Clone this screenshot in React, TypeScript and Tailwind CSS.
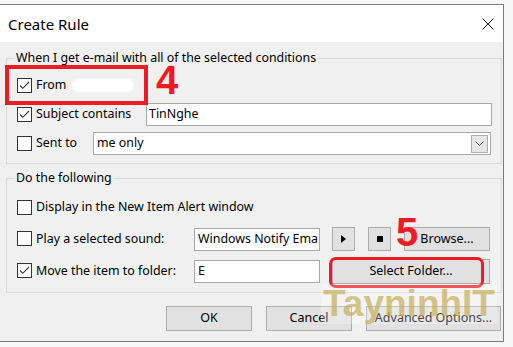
import React from "react";

const Check = ({ checked }: { checked?: boolean }) => (
  <div className="w-[15px] h-[15px] shrink-0 border border-[#333333] bg-white flex items-center justify-center">
    {checked && (
      <svg width="13" height="13" viewBox="0 0 13 13">
        <path d="M2 6.5 L4.8 9.3 L11 3" fill="none" stroke="#333333" strokeWidth="1.1" />
      </svg>
    )}
  </div>
);

const Btn = ({ className = "", children }: { className?: string; children?: React.ReactNode }) => (
  <div
    className={
      "h-[24px] shrink-0 bg-[#e1e1e1] border border-[#adadad] flex items-center justify-center text-[12.5px] text-black " +
      className
    }
  >
    {children}
  </div>
);

export default function App() {
  return (
    <div
      className="relative w-[513px] h-[347px] bg-[#f7f7f7] overflow-hidden text-black"
      style={{ fontFamily: '"Noto Sans", "Open Sans", sans-serif' }}
    >
      <div className="mt-[4px] w-[504px] h-[338px] border-t border-r border-b border-[#7c7c7c] bg-[#f0f0f0] flex flex-col">
        {/* title bar */}
        <div className="h-[37px] shrink-0 bg-white flex items-center pl-[8px] pr-[9px]">
          <span className="text-[15px] leading-none mt-[1px]">Create Rule</span>
          <svg className="ml-auto mt-[1px]" width="12" height="12" viewBox="0 0 12 12">
            <path d="M0.5 0.5 L11.5 11.5 M11.5 0.5 L0.5 11.5" stroke="#111" strokeWidth="1" />
          </svg>
        </div>

        {/* group 1 */}
        <div className="relative mt-[16px] ml-[6px] w-[496px] h-[106px] border border-[#dcdcdc] pt-[15px] pl-[10px] flex flex-col gap-[6px]">
          <span className="absolute left-[8px] -top-[9px] bg-[#f0f0f0] px-[1px] text-[12.4px] leading-[16px]">
            When I get e-mail with all of the selected conditions
          </span>
          <div className="h-[23px] flex items-center">
            <Check checked />
            <span className="ml-[4px] text-[12.4px]">From</span>
            <span className="ml-[6px] w-[62px] h-[13px] bg-white rounded-full blur-[1px]" />
          </div>
          <div className="h-[23px] flex items-center">
            <div className="w-[129px] shrink-0 flex items-center">
              <Check checked />
              <span className="ml-[4px] text-[12.4px]">Subject contains</span>
            </div>
            <div className="w-[346px] h-[23px] bg-white border border-[#a8a8a8] flex items-center pl-[2px] text-[12.4px]">
              TinNghe
            </div>
          </div>
          <div className="h-[23px] flex items-center">
            <div className="w-[76px] shrink-0 flex items-center">
              <Check />
              <span className="ml-[4px] text-[12.4px]">Sent to</span>
            </div>
            <div className="w-[398px] h-[23px] bg-white border border-[#a8a8a8] flex items-center pl-[3px] pr-[2px] text-[12.4px]">
              <span>me only</span>
              <div className="ml-auto w-[17px] h-[18px] bg-[#e5e5e5] border border-[#adadad] flex items-center justify-center">
                <svg width="9" height="5" viewBox="0 0 9 5">
                  <path d="M0.5 0.5 L4.5 4.5 L8.5 0.5" fill="none" stroke="#555" strokeWidth="1" />
                </svg>
              </div>
            </div>
          </div>
        </div>

        {/* group 2 */}
        <div className="relative mt-[14px] ml-[6px] w-[496px] h-[115px] border border-[#dcdcdc] pt-[16px] pl-[10px] flex flex-col gap-[8px]">
          <span className="absolute left-[8px] -top-[9px] bg-[#f0f0f0] px-[1px] text-[12.4px] leading-[16px]">
            Do the following
          </span>
          <div className="h-[24px] flex items-center">
            <Check />
            <span className="ml-[4px] text-[12.4px]">Display in the New Item Alert window</span>
          </div>
          <div className="h-[24px] flex items-center">
            <div className="w-[177px] shrink-0 flex items-center">
              <Check />
              <span className="ml-[4px] text-[12.4px]">Play a selected sound:</span>
            </div>
            <div className="w-[126px] h-[23px] bg-white border border-[#a8a8a8] flex items-center pl-[3px] text-[12.4px] overflow-hidden whitespace-nowrap">
              Windows Notify Ema
            </div>
            <Btn className="ml-[12px] w-[23px]">
              <svg width="5" height="8" viewBox="0 0 5 8">
                <path d="M0 0 L5 4 L0 8 Z" fill="#000" />
              </svg>
            </Btn>
            <Btn className="ml-[13px] w-[23px]">
              <div className="w-[6px] h-[6px] bg-black" />
            </Btn>
            <Btn className="ml-[13px] w-[86px]">Browse...</Btn>
          </div>
          <div className="h-[24px] flex items-center">
            <div className="w-[177px] shrink-0 flex items-center">
              <Check checked />
              <span className="ml-[4px] text-[12.4px]">Move the item to folder:</span>
            </div>
            <div className="w-[126px] h-[23px] bg-white border border-[#a8a8a8] flex items-center pl-[3px] text-[12.4px] overflow-hidden whitespace-nowrap">
              <span>E</span>
              <span className="ml-[1px] w-[58px] h-[11px] bg-white blur-[1px]" />
            </div>
            <Btn className="ml-[12px] w-[158px] h-[25px]">Select Folder...</Btn>
          </div>
        </div>

        {/* bottom buttons */}
        <div className="mt-[13px] flex justify-end gap-[14px] pr-[2px]">
          <Btn className="w-[86px] h-[25px]">OK</Btn>
          <Btn className="w-[86px] h-[25px]">Cancel</Btn>
          <Btn className="w-[135px] h-[25px]">Advanced Options...</Btn>
        </div>
      </div>

      {/* annotations */}
      <div className="absolute z-10 left-[5px] top-[65px] w-[143px] h-[40px] border-[4px] border-[#ed1c24]" />
      <div
        className="absolute z-10 left-[156px] top-[56px] text-[40px] font-bold leading-[48px] text-[#ed1c24]"
        style={{ fontFamily: '"Liberation Sans", Arial, sans-serif' }}
      >
        4
      </div>
      <div
        className="absolute z-10 left-[396px] top-[208px] text-[40px] font-bold leading-[48px] text-[#ed1c24]"
        style={{ fontFamily: '"Liberation Sans", Arial, sans-serif' }}
      >
        5
      </div>
      <div className="absolute z-10 left-[329px] top-[257px] w-[155px] h-[31px] border-[3px] border-[#ed1c24] rounded-[7px]" />
      <div
        className="absolute z-20 left-[321px] top-[284px] w-[176px] h-[40px] bg-white/25 flex items-center justify-center text-[37px] font-bold leading-[40px] text-[#c5ad55]/70"
        style={{ fontFamily: '"Liberation Sans", Arial, sans-serif' }}
      >
        TayninhIT
      </div>
    </div>
  );
}
